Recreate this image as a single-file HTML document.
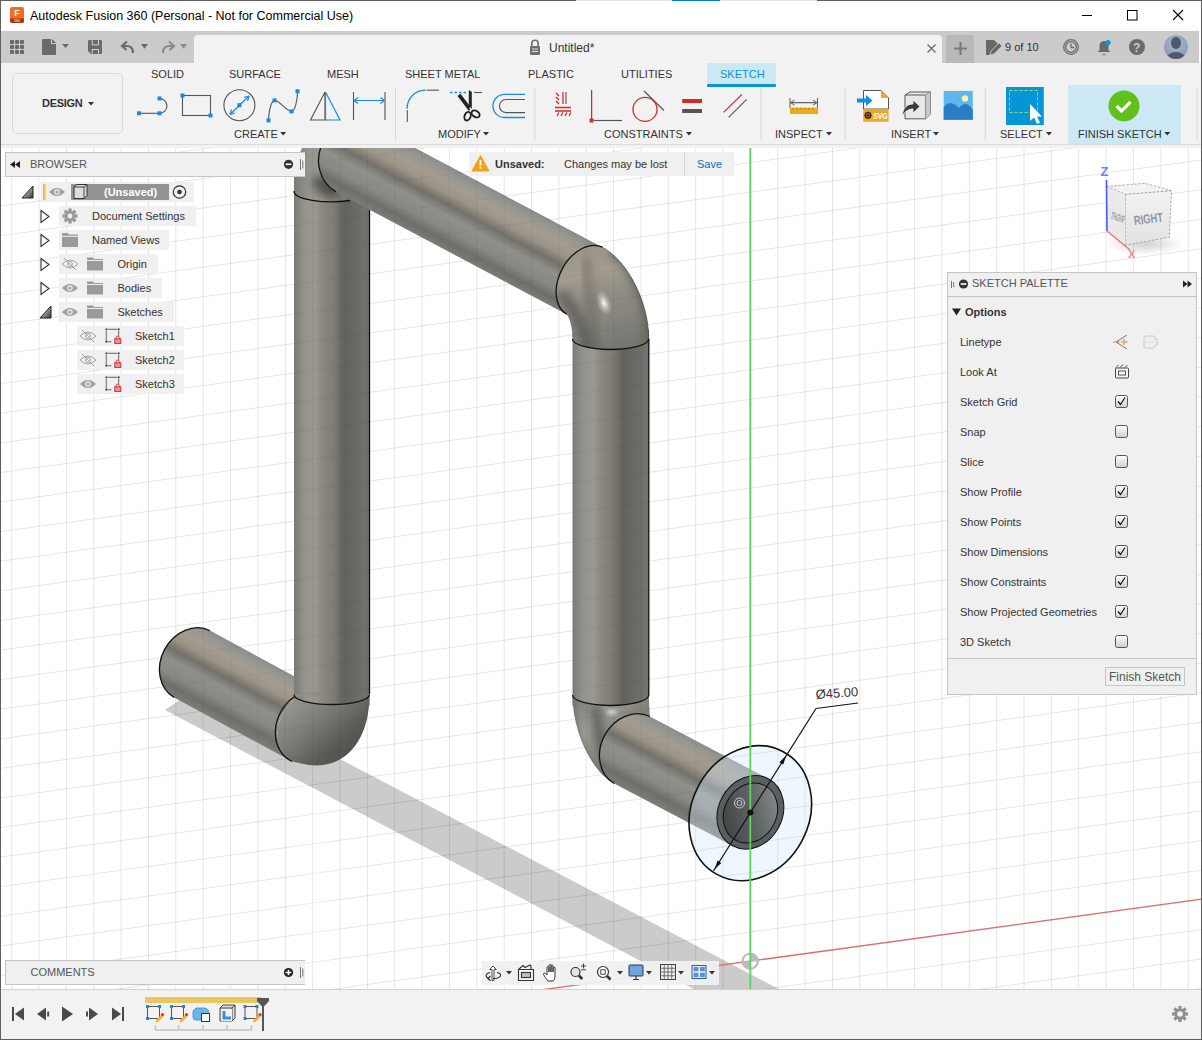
<!DOCTYPE html>
<html><head><meta charset="utf-8">
<style>
*{box-sizing:border-box}
html,body{margin:0;padding:0;width:1202px;height:1040px;overflow:hidden;background:#fff;font-family:"Liberation Sans",sans-serif;color:#333}
.a{position:absolute}
.t{position:absolute;white-space:nowrap;line-height:1}
svg{position:absolute;overflow:visible}
.tb{font-size:11px;color:#333}
</style></head><body>
<svg id="vp" style="left:0;top:0;overflow:hidden" width="1202" height="1040" viewBox="0 0 1202 1040">
<clipPath id="vpc"><rect x="1" y="148" width="1200" height="841"/></clipPath>
<g clip-path="url(#vpc)">
<defs>
<linearGradient id="gv" x1="0" y1="0" x2="1" y2="0">
<stop offset="0" stop-color="#7b7b76"/><stop offset="0.15" stop-color="#959590"/><stop offset="0.28" stop-color="#9a978f"/><stop offset="0.38" stop-color="#8b877e"/><stop offset="0.52" stop-color="#7d7c75"/><stop offset="0.67" stop-color="#62625d"/><stop offset="0.88" stop-color="#6d6d69"/><stop offset="1" stop-color="#74746f"/>
</linearGradient>
<linearGradient id="gs" gradientUnits="userSpaceOnUse" x1="607.9" y1="251.5" x2="572.1" y2="318.5">
<stop offset="0" stop-color="#8c8d88"/><stop offset="0.08" stop-color="#979791"/><stop offset="0.2" stop-color="#a49c8f"/><stop offset="0.32" stop-color="#9b9488"/><stop offset="0.45" stop-color="#73716a"/><stop offset="0.58" stop-color="#8f908b"/><stop offset="0.75" stop-color="#888984"/><stop offset="0.88" stop-color="#6e6f6a"/><stop offset="1" stop-color="#7c7d78"/>
</linearGradient>
<linearGradient id="gsb" href="#gs" x1="209.9" y1="630.5" x2="174.1" y2="697.5"/>
<linearGradient id="gsbr" href="#gs" x1="768.3" y1="778.8" x2="732.5" y2="845.8"/>
<linearGradient id="ge2" gradientUnits="userSpaceOnUse" x1="585" y1="248" x2="612" y2="350">
<stop offset="0" stop-color="#9b968b"/><stop offset="0.25" stop-color="#a39c8f"/><stop offset="0.5" stop-color="#8e8b83"/><stop offset="0.75" stop-color="#83837d"/><stop offset="1" stop-color="#767671"/>
</linearGradient>
<filter id="bl4" x="-50%" y="-50%" width="200%" height="200%"><feGaussianBlur stdDeviation="4"/></filter>
<filter id="bl2" x="-50%" y="-50%" width="200%" height="200%"><feGaussianBlur stdDeviation="2"/></filter>
<clipPath id="e2c"><path d="M566.6,314.2 A38 26 -61.85 0 1 602.4,247.2 C627.9,261 648.8,302.2 648.8,339 A38.15 10.5 0 0 1 572.5,339 C572.5,328 570,318 566.6,314.2 Z"/></clipPath>
<linearGradient id="ge3" gradientUnits="userSpaceOnUse" x1="298" y1="702" x2="352" y2="762">
<stop offset="0" stop-color="#92928d"/><stop offset="0.35" stop-color="#7a7973"/><stop offset="0.7" stop-color="#5b5a55"/><stop offset="1" stop-color="#4f4e4a"/>
</linearGradient>
<linearGradient id="ge4" gradientUnits="userSpaceOnUse" x1="572" y1="700" x2="650" y2="760">
<stop offset="0" stop-color="#7c7c77"/><stop offset="0.3" stop-color="#9a9a95"/><stop offset="0.6" stop-color="#85847c"/><stop offset="1" stop-color="#6c6c67"/>
</linearGradient>
<linearGradient id="gin" gradientUnits="userSpaceOnUse" x1="730" y1="790" x2="775" y2="840">
<stop offset="0" stop-color="#3f4444"/><stop offset="0.5" stop-color="#5e6464"/><stop offset="1" stop-color="#8d9290"/>
</linearGradient>
<radialGradient id="hl" cx="0.5" cy="0.5" r="0.5">
<stop offset="0" stop-color="#fff" stop-opacity="0.95"/><stop offset="0.5" stop-color="#fff" stop-opacity="0.35"/><stop offset="1" stop-color="#fff" stop-opacity="0"/>
</radialGradient>
</defs>
<g stroke="rgba(0,0,0,0.058)" stroke-width="1">
<line x1="11.7" y1="148" x2="11.7" y2="989"/>
<line x1="39.0" y1="148" x2="39.0" y2="989"/>
<line x1="66.4" y1="148" x2="66.4" y2="989"/>
<line x1="93.8" y1="148" x2="93.8" y2="989"/>
<line x1="121.1" y1="148" x2="121.1" y2="989"/>
<line x1="148.5" y1="148" x2="148.5" y2="989"/>
<line x1="175.8" y1="148" x2="175.8" y2="989"/>
<line x1="203.2" y1="148" x2="203.2" y2="989"/>
<line x1="230.6" y1="148" x2="230.6" y2="989"/>
<line x1="257.9" y1="148" x2="257.9" y2="989"/>
<line x1="285.3" y1="148" x2="285.3" y2="989"/>
<line x1="312.6" y1="148" x2="312.6" y2="989"/>
<line x1="340.0" y1="148" x2="340.0" y2="989"/>
<line x1="367.4" y1="148" x2="367.4" y2="989"/>
<line x1="394.7" y1="148" x2="394.7" y2="989"/>
<line x1="422.1" y1="148" x2="422.1" y2="989"/>
<line x1="449.4" y1="148" x2="449.4" y2="989"/>
<line x1="476.8" y1="148" x2="476.8" y2="989"/>
<line x1="504.2" y1="148" x2="504.2" y2="989"/>
<line x1="531.5" y1="148" x2="531.5" y2="989"/>
<line x1="558.9" y1="148" x2="558.9" y2="989"/>
<line x1="586.2" y1="148" x2="586.2" y2="989"/>
<line x1="613.6" y1="148" x2="613.6" y2="989"/>
<line x1="641.0" y1="148" x2="641.0" y2="989"/>
<line x1="668.3" y1="148" x2="668.3" y2="989"/>
<line x1="695.7" y1="148" x2="695.7" y2="989"/>
<line x1="723.0" y1="148" x2="723.0" y2="989"/>
<line x1="750.4" y1="148" x2="750.4" y2="989"/>
<line x1="777.8" y1="148" x2="777.8" y2="989"/>
<line x1="805.1" y1="148" x2="805.1" y2="989"/>
<line x1="832.5" y1="148" x2="832.5" y2="989"/>
<line x1="859.8" y1="148" x2="859.8" y2="989"/>
<line x1="887.2" y1="148" x2="887.2" y2="989"/>
<line x1="914.6" y1="148" x2="914.6" y2="989"/>
<line x1="941.9" y1="148" x2="941.9" y2="989"/>
<line x1="969.3" y1="148" x2="969.3" y2="989"/>
<line x1="996.6" y1="148" x2="996.6" y2="989"/>
<line x1="1024.0" y1="148" x2="1024.0" y2="989"/>
<line x1="1051.4" y1="148" x2="1051.4" y2="989"/>
<line x1="1078.7" y1="148" x2="1078.7" y2="989"/>
<line x1="1106.1" y1="148" x2="1106.1" y2="989"/>
<line x1="1133.4" y1="148" x2="1133.4" y2="989"/>
<line x1="1160.8" y1="148" x2="1160.8" y2="989"/>
<line x1="1188.2" y1="148" x2="1188.2" y2="989"/>
<line x1="0" y1="147.1" x2="1202" y2="-17.6"/>
<line x1="0" y1="176.7" x2="1202" y2="12.0"/>
<line x1="0" y1="206.2" x2="1202" y2="41.6"/>
<line x1="0" y1="235.8" x2="1202" y2="71.2"/>
<line x1="0" y1="265.4" x2="1202" y2="100.7"/>
<line x1="0" y1="295.0" x2="1202" y2="130.3"/>
<line x1="0" y1="324.6" x2="1202" y2="159.9"/>
<line x1="0" y1="354.2" x2="1202" y2="189.5"/>
<line x1="0" y1="383.8" x2="1202" y2="219.1"/>
<line x1="0" y1="413.4" x2="1202" y2="248.7"/>
<line x1="0" y1="443.0" x2="1202" y2="278.3"/>
<line x1="0" y1="472.6" x2="1202" y2="307.9"/>
<line x1="0" y1="502.1" x2="1202" y2="337.5"/>
<line x1="0" y1="531.7" x2="1202" y2="367.1"/>
<line x1="0" y1="561.3" x2="1202" y2="396.6"/>
<line x1="0" y1="590.9" x2="1202" y2="426.2"/>
<line x1="0" y1="620.5" x2="1202" y2="455.8"/>
<line x1="0" y1="650.1" x2="1202" y2="485.4"/>
<line x1="0" y1="679.7" x2="1202" y2="515.0"/>
<line x1="0" y1="709.3" x2="1202" y2="544.6"/>
<line x1="0" y1="738.9" x2="1202" y2="574.2"/>
<line x1="0" y1="768.5" x2="1202" y2="603.8"/>
<line x1="0" y1="798.0" x2="1202" y2="633.4"/>
<line x1="0" y1="827.6" x2="1202" y2="663.0"/>
<line x1="0" y1="857.2" x2="1202" y2="692.5"/>
<line x1="0" y1="886.8" x2="1202" y2="722.1"/>
<line x1="0" y1="916.4" x2="1202" y2="751.7"/>
<line x1="0" y1="946.0" x2="1202" y2="781.3"/>
<line x1="0" y1="975.6" x2="1202" y2="810.9"/>
<line x1="0" y1="1005.2" x2="1202" y2="840.5"/>
<line x1="0" y1="1034.8" x2="1202" y2="870.1"/>
<line x1="0" y1="1064.4" x2="1202" y2="899.7"/>
<line x1="0" y1="1093.9" x2="1202" y2="929.3"/>
<line x1="0" y1="1123.5" x2="1202" y2="958.9"/>
<line x1="0" y1="1153.1" x2="1202" y2="988.4"/>
</g>
<filter id="bl8" x="-50%" y="-50%" width="200%" height="200%"><feGaussianBlur stdDeviation="7"/></filter>
<path d="M165,722 L300,792 L300,975 L330,975 L330,770 L180,700 Z" fill="#fff" opacity="0.5" filter="url(#bl8)"/>
<!-- shadow band -->
<clipPath id="shc"><polygon points="165,709.9 200,685.7 1000,1104.9 1000,1150.8"/></clipPath>
<polygon points="165,709.9 200,685.7 1000,1104.9 1000,1150.8" fill="#cbcbcb"/>
<g stroke="rgba(0,0,0,0.058)" stroke-width="1" clip-path="url(#shc)">
<line x1="11.7" y1="148" x2="11.7" y2="989"/>
<line x1="39.0" y1="148" x2="39.0" y2="989"/>
<line x1="66.4" y1="148" x2="66.4" y2="989"/>
<line x1="93.8" y1="148" x2="93.8" y2="989"/>
<line x1="121.1" y1="148" x2="121.1" y2="989"/>
<line x1="148.5" y1="148" x2="148.5" y2="989"/>
<line x1="175.8" y1="148" x2="175.8" y2="989"/>
<line x1="203.2" y1="148" x2="203.2" y2="989"/>
<line x1="230.6" y1="148" x2="230.6" y2="989"/>
<line x1="257.9" y1="148" x2="257.9" y2="989"/>
<line x1="285.3" y1="148" x2="285.3" y2="989"/>
<line x1="312.6" y1="148" x2="312.6" y2="989"/>
<line x1="340.0" y1="148" x2="340.0" y2="989"/>
<line x1="367.4" y1="148" x2="367.4" y2="989"/>
<line x1="394.7" y1="148" x2="394.7" y2="989"/>
<line x1="422.1" y1="148" x2="422.1" y2="989"/>
<line x1="449.4" y1="148" x2="449.4" y2="989"/>
<line x1="476.8" y1="148" x2="476.8" y2="989"/>
<line x1="504.2" y1="148" x2="504.2" y2="989"/>
<line x1="531.5" y1="148" x2="531.5" y2="989"/>
<line x1="558.9" y1="148" x2="558.9" y2="989"/>
<line x1="586.2" y1="148" x2="586.2" y2="989"/>
<line x1="613.6" y1="148" x2="613.6" y2="989"/>
<line x1="641.0" y1="148" x2="641.0" y2="989"/>
<line x1="668.3" y1="148" x2="668.3" y2="989"/>
<line x1="695.7" y1="148" x2="695.7" y2="989"/>
<line x1="723.0" y1="148" x2="723.0" y2="989"/>
<line x1="750.4" y1="148" x2="750.4" y2="989"/>
<line x1="777.8" y1="148" x2="777.8" y2="989"/>
<line x1="805.1" y1="148" x2="805.1" y2="989"/>
<line x1="832.5" y1="148" x2="832.5" y2="989"/>
<line x1="859.8" y1="148" x2="859.8" y2="989"/>
<line x1="887.2" y1="148" x2="887.2" y2="989"/>
<line x1="914.6" y1="148" x2="914.6" y2="989"/>
<line x1="941.9" y1="148" x2="941.9" y2="989"/>
<line x1="969.3" y1="148" x2="969.3" y2="989"/>
<line x1="996.6" y1="148" x2="996.6" y2="989"/>
<line x1="1024.0" y1="148" x2="1024.0" y2="989"/>
<line x1="1051.4" y1="148" x2="1051.4" y2="989"/>
<line x1="1078.7" y1="148" x2="1078.7" y2="989"/>
<line x1="1106.1" y1="148" x2="1106.1" y2="989"/>
<line x1="1133.4" y1="148" x2="1133.4" y2="989"/>
<line x1="1160.8" y1="148" x2="1160.8" y2="989"/>
<line x1="1188.2" y1="148" x2="1188.2" y2="989"/>
<line x1="0" y1="147.1" x2="1202" y2="-17.6"/>
<line x1="0" y1="176.7" x2="1202" y2="12.0"/>
<line x1="0" y1="206.2" x2="1202" y2="41.6"/>
<line x1="0" y1="235.8" x2="1202" y2="71.2"/>
<line x1="0" y1="265.4" x2="1202" y2="100.7"/>
<line x1="0" y1="295.0" x2="1202" y2="130.3"/>
<line x1="0" y1="324.6" x2="1202" y2="159.9"/>
<line x1="0" y1="354.2" x2="1202" y2="189.5"/>
<line x1="0" y1="383.8" x2="1202" y2="219.1"/>
<line x1="0" y1="413.4" x2="1202" y2="248.7"/>
<line x1="0" y1="443.0" x2="1202" y2="278.3"/>
<line x1="0" y1="472.6" x2="1202" y2="307.9"/>
<line x1="0" y1="502.1" x2="1202" y2="337.5"/>
<line x1="0" y1="531.7" x2="1202" y2="367.1"/>
<line x1="0" y1="561.3" x2="1202" y2="396.6"/>
<line x1="0" y1="590.9" x2="1202" y2="426.2"/>
<line x1="0" y1="620.5" x2="1202" y2="455.8"/>
<line x1="0" y1="650.1" x2="1202" y2="485.4"/>
<line x1="0" y1="679.7" x2="1202" y2="515.0"/>
<line x1="0" y1="709.3" x2="1202" y2="544.6"/>
<line x1="0" y1="738.9" x2="1202" y2="574.2"/>
<line x1="0" y1="768.5" x2="1202" y2="603.8"/>
<line x1="0" y1="798.0" x2="1202" y2="633.4"/>
<line x1="0" y1="827.6" x2="1202" y2="663.0"/>
<line x1="0" y1="857.2" x2="1202" y2="692.5"/>
<line x1="0" y1="886.8" x2="1202" y2="722.1"/>
<line x1="0" y1="916.4" x2="1202" y2="751.7"/>
<line x1="0" y1="946.0" x2="1202" y2="781.3"/>
<line x1="0" y1="975.6" x2="1202" y2="810.9"/>
<line x1="0" y1="1005.2" x2="1202" y2="840.5"/>
<line x1="0" y1="1034.8" x2="1202" y2="870.1"/>
<line x1="0" y1="1064.4" x2="1202" y2="899.7"/>
<line x1="0" y1="1093.9" x2="1202" y2="929.3"/>
<line x1="0" y1="1123.5" x2="1202" y2="958.9"/>
<line x1="0" y1="1153.1" x2="1202" y2="988.4"/>
</g>
<!-- red axis -->
<line x1="540" y1="990" x2="1202" y2="899" stroke="#e07070" stroke-width="1.3"/>
<!-- BL pipe -->
<path d="M209.9,630.5 L327.9,694.5 A38 32 -61.85 0 0 292.1,761.5 L174.1,697.5 A38 32 -61.85 0 1 209.9,630.5 Z" fill="url(#gsb)"/>
<!-- VP1 -->
<rect x="294" y="185" width="75.5" height="521" fill="url(#gv)"/>
<!-- E3 -->
<path d="M294,694.5 A37.75 10 0 0 0 369.5,694.5 C369.5,748 338,773 301,763.5 L292.1,761.5 A38 32 -61.85 0 1 327.9,694.5 Z" fill="url(#ge3)"/>
<!-- E1 -->
<path d="M294,191 L294,178 Q296,160 302,148 L390,148 L372.9,210 L369.5,191 A37.75 10.5 0 0 1 294,191 Z" fill="url(#gv)"/>
<!-- TP -->
<clipPath id="e1c"><path d="M294,191 L294,178 Q296,160 302,148 L390,148 L372.9,210 L369.5,191 A37.75 10.5 0 0 1 294,191 Z"/></clipPath>
<g clip-path="url(#e1c)"><ellipse cx="326" cy="187" rx="15" ry="9" transform="rotate(35 326 187)" fill="#4a4a45" opacity="0.85" filter="url(#bl4)"/></g>
<path d="M371.9,125 L602.4,247.2 A38 26 -61.85 0 0 566.6,314.2 L336.1,192 A38 36 -61.85 0 1 371.9,125 Z" fill="url(#gs)"/>
<!-- VP2 -->
<rect x="572.5" y="330" width="76.3" height="376" fill="url(#gv)"/>
<!-- E2 -->
<path d="M566.6,314.2 A38 26 -61.85 0 1 602.4,247.2 C627.9,261 648.8,302.2 648.8,339 A38.15 10.5 0 0 1 572.5,339 C572.5,328 570,318 566.6,314.2 Z" fill="url(#ge2)"/>
<g clip-path="url(#e2c)">
<path d="M560,292 Q580,315 590,352" fill="none" stroke="#5a5a54" stroke-width="12" opacity="0.75" filter="url(#bl4)"/>
<path d="M586,258 Q590,300 596,348" fill="none" stroke="#66645c" stroke-width="8" opacity="0.55" filter="url(#bl4)"/>
<path d="M612,250 C634,263 652,302 652,345" fill="none" stroke="#555550" stroke-width="12" opacity="0.7" filter="url(#bl4)"/>
</g>
<ellipse cx="604" cy="303" rx="7" ry="13" transform="rotate(-20 604 303)" fill="url(#hl)"/>
<!-- E4 -->
<path d="M572.5,695 A38.15 10.5 0 0 0 648.8,695 Q649.5,712 649.9,716.5 A38 32 -61.85 0 0 614.1,783.5 C591.2,771.2 572.5,731.4 572.5,695 Z" fill="url(#ge4)"/>
<clipPath id="e4c"><path d="M572.5,695 A38.15 10.5 0 0 0 648.8,695 Q649.5,712 649.9,716.5 A38 32 -61.85 0 0 614.1,783.5 C591.2,771.2 572.5,731.4 572.5,695 Z"/></clipPath>
<g clip-path="url(#e4c)">
<path d="M596,706 Q598,745 618,790" fill="none" stroke="#50504b" stroke-width="9" opacity="0.8" filter="url(#bl4)"/>
<path d="M572,700 C572,735 590,772 614,786" fill="none" stroke="#5c5c57" stroke-width="6" opacity="0.4" filter="url(#bl2)"/>
</g>
<ellipse cx="612" cy="712.3" rx="5" ry="2" fill="#fff" opacity="0.85" filter="url(#bl2)"/>
<!-- BR pipe -->
<path d="M649.9,716.5 L768.3,778.8 A38 32 -61.85 0 1 732.5,845.8 L614.1,783.5 A38 32 -61.85 0 1 649.9,716.5 Z" fill="url(#gsbr)"/>
<!-- seams / edges -->
<g fill="none" stroke="#111" stroke-width="1.3">
<path d="M602.4,247.2 A38 26 -61.85 0 0 566.6,314.2"/>

<path d="M572.5,339 A38.15 10.5 0 0 0 648.8,339"/>
<path d="M371.9,125 A38 36 -61.85 0 0 336.1,192"/>
<path d="M294,191 A37.75 10.5 0 0 0 350,200.5"/>
<path d="M294,694.5 A37.75 10 0 0 0 369.5,694.5"/>
<path d="M292.1,761.5 A38 32 -61.85 0 1 294,697"/>
<path d="M572.5,695 A38.15 10.5 0 0 0 648.8,695"/>
<path d="M649.9,716.5 A38 32 -61.85 0 0 614.1,783.5"/>
<path d="M209.9,630.5 A38 32 -61.85 0 0 174.1,697.5"/>
<line x1="369.5" y1="210" x2="369.5" y2="694"/>
<line x1="648.8" y1="339" x2="648.8" y2="695"/>
<path d="M602.4,247.2 C627.9,261 648.8,302.2 648.8,339" stroke-width="1" opacity="0.45"/>
</g>
<!-- sketch circle -->
<ellipse cx="750.3" cy="813.2" rx="69.7" ry="58.6" transform="rotate(-61.85 750.3 813.2)" fill="rgba(212,232,250,0.38)" stroke="#111" stroke-width="1.6"/>
<!-- end face -->
<ellipse cx="750.4" cy="812.3" rx="38" ry="32" transform="rotate(-61.85 750.4 812.3)" fill="#596060" stroke="#111" stroke-width="1"/>
<ellipse cx="750.4" cy="813" rx="31" ry="26" transform="rotate(-61.85 750.4 813)" fill="url(#gin)" stroke="#111" stroke-width="1"/>
<!-- small concentric icon -->
<circle cx="739.5" cy="803" r="5" fill="none" stroke="#ccc" stroke-width="1"/>
<circle cx="739.5" cy="803" r="2.5" fill="none" stroke="#ccc" stroke-width="1"/>
<!-- green axis -->

<!-- grid -->
<g stroke="rgba(0,0,0,0.045)" stroke-width="1">
<line x1="11.7" y1="148" x2="11.7" y2="989"/>
<line x1="39.0" y1="148" x2="39.0" y2="989"/>
<line x1="66.4" y1="148" x2="66.4" y2="989"/>
<line x1="93.8" y1="148" x2="93.8" y2="989"/>
<line x1="121.1" y1="148" x2="121.1" y2="989"/>
<line x1="148.5" y1="148" x2="148.5" y2="989"/>
<line x1="175.8" y1="148" x2="175.8" y2="989"/>
<line x1="203.2" y1="148" x2="203.2" y2="989"/>
<line x1="230.6" y1="148" x2="230.6" y2="989"/>
<line x1="257.9" y1="148" x2="257.9" y2="989"/>
<line x1="285.3" y1="148" x2="285.3" y2="989"/>
<line x1="312.6" y1="148" x2="312.6" y2="989"/>
<line x1="340.0" y1="148" x2="340.0" y2="989"/>
<line x1="367.4" y1="148" x2="367.4" y2="989"/>
<line x1="394.7" y1="148" x2="394.7" y2="989"/>
<line x1="422.1" y1="148" x2="422.1" y2="989"/>
<line x1="449.4" y1="148" x2="449.4" y2="989"/>
<line x1="476.8" y1="148" x2="476.8" y2="989"/>
<line x1="504.2" y1="148" x2="504.2" y2="989"/>
<line x1="531.5" y1="148" x2="531.5" y2="989"/>
<line x1="558.9" y1="148" x2="558.9" y2="989"/>
<line x1="586.2" y1="148" x2="586.2" y2="989"/>
<line x1="613.6" y1="148" x2="613.6" y2="989"/>
<line x1="641.0" y1="148" x2="641.0" y2="989"/>
<line x1="668.3" y1="148" x2="668.3" y2="989"/>
<line x1="695.7" y1="148" x2="695.7" y2="989"/>
<line x1="723.0" y1="148" x2="723.0" y2="989"/>
<line x1="750.4" y1="148" x2="750.4" y2="989"/>
<line x1="777.8" y1="148" x2="777.8" y2="989"/>
<line x1="805.1" y1="148" x2="805.1" y2="989"/>
<line x1="832.5" y1="148" x2="832.5" y2="989"/>
<line x1="859.8" y1="148" x2="859.8" y2="989"/>
<line x1="887.2" y1="148" x2="887.2" y2="989"/>
<line x1="914.6" y1="148" x2="914.6" y2="989"/>
<line x1="941.9" y1="148" x2="941.9" y2="989"/>
<line x1="969.3" y1="148" x2="969.3" y2="989"/>
<line x1="996.6" y1="148" x2="996.6" y2="989"/>
<line x1="1024.0" y1="148" x2="1024.0" y2="989"/>
<line x1="1051.4" y1="148" x2="1051.4" y2="989"/>
<line x1="1078.7" y1="148" x2="1078.7" y2="989"/>
<line x1="1106.1" y1="148" x2="1106.1" y2="989"/>
<line x1="1133.4" y1="148" x2="1133.4" y2="989"/>
<line x1="1160.8" y1="148" x2="1160.8" y2="989"/>
<line x1="1188.2" y1="148" x2="1188.2" y2="989"/>
<line x1="0" y1="147.1" x2="1202" y2="-17.6"/>
<line x1="0" y1="176.7" x2="1202" y2="12.0"/>
<line x1="0" y1="206.2" x2="1202" y2="41.6"/>
<line x1="0" y1="235.8" x2="1202" y2="71.2"/>
<line x1="0" y1="265.4" x2="1202" y2="100.7"/>
<line x1="0" y1="295.0" x2="1202" y2="130.3"/>
<line x1="0" y1="324.6" x2="1202" y2="159.9"/>
<line x1="0" y1="354.2" x2="1202" y2="189.5"/>
<line x1="0" y1="383.8" x2="1202" y2="219.1"/>
<line x1="0" y1="413.4" x2="1202" y2="248.7"/>
<line x1="0" y1="443.0" x2="1202" y2="278.3"/>
<line x1="0" y1="472.6" x2="1202" y2="307.9"/>
<line x1="0" y1="502.1" x2="1202" y2="337.5"/>
<line x1="0" y1="531.7" x2="1202" y2="367.1"/>
<line x1="0" y1="561.3" x2="1202" y2="396.6"/>
<line x1="0" y1="590.9" x2="1202" y2="426.2"/>
<line x1="0" y1="620.5" x2="1202" y2="455.8"/>
<line x1="0" y1="650.1" x2="1202" y2="485.4"/>
<line x1="0" y1="679.7" x2="1202" y2="515.0"/>
<line x1="0" y1="709.3" x2="1202" y2="544.6"/>
<line x1="0" y1="738.9" x2="1202" y2="574.2"/>
<line x1="0" y1="768.5" x2="1202" y2="603.8"/>
<line x1="0" y1="798.0" x2="1202" y2="633.4"/>
<line x1="0" y1="827.6" x2="1202" y2="663.0"/>
<line x1="0" y1="857.2" x2="1202" y2="692.5"/>
<line x1="0" y1="886.8" x2="1202" y2="722.1"/>
<line x1="0" y1="916.4" x2="1202" y2="751.7"/>
<line x1="0" y1="946.0" x2="1202" y2="781.3"/>
<line x1="0" y1="975.6" x2="1202" y2="810.9"/>
<line x1="0" y1="1005.2" x2="1202" y2="840.5"/>
<line x1="0" y1="1034.8" x2="1202" y2="870.1"/>
<line x1="0" y1="1064.4" x2="1202" y2="899.7"/>
<line x1="0" y1="1093.9" x2="1202" y2="929.3"/>
<line x1="0" y1="1123.5" x2="1202" y2="958.9"/>
<line x1="0" y1="1153.1" x2="1202" y2="988.4"/>
</g>
<!-- origin -->
<circle cx="750.2" cy="961.2" r="7.6" fill="none" stroke="#bcbcbc" stroke-width="2.2"/><path d="M750.2,961.2 v-7.6 a7.6,7.6 0 0 1 7.6,7.6z M750.2,961.2 v7.6 a7.6,7.6 0 0 1 -7.6,-7.6z" fill="#bcbcbc"/>
<line x1="750.3" y1="148" x2="750.3" y2="989" stroke="#5ad55a" stroke-width="1.8"/>
<!-- dimension -->
<g stroke="#111" stroke-width="1.2" fill="none">
<line x1="713.5" y1="871" x2="816" y2="708.5"/>
<line x1="816" y1="708.5" x2="858" y2="703"/>
</g>
<polygon points="714.6,869.3 721.3,862.9 717.5,860.5" fill="#111"/>
<polygon points="786.1,755.8 783.2,764.6 779.4,762.2" fill="#111"/>
<circle cx="750.4" cy="812.5" r="3" fill="#111"/>
<text x="816" y="699" font-size="13" fill="#333" transform="rotate(-4 816 699)" font-family="Liberation Sans">Ø45.00</text>

</g>
</svg>
<!-- BROWSER -->
<div class="a" style="left:5px;top:152px;width:300px;height:25px;background:#f0f0f0;border:1px solid #c6c6c6;border-right:none"></div>
<div class="t" style="left:30px;top:158.9px;font-size:11px;color:#555">BROWSER</div>
<div class="a" style="left:41px;top:182px;width:153px;height:20px;background:#f0f0f0"></div>
<div class="a" style="left:59px;top:206px;width:137px;height:20px;background:#f0f0f0"></div>
<div class="a" style="left:59px;top:230px;width:110px;height:20px;background:#f0f0f0"></div>
<div class="a" style="left:59px;top:254px;width:99px;height:20px;background:#f0f0f0"></div>
<div class="a" style="left:59px;top:278px;width:103px;height:20px;background:#f0f0f0"></div>
<div class="a" style="left:59px;top:302px;width:115px;height:20px;background:#f0f0f0"></div>
<div class="a" style="left:77px;top:326px;width:107px;height:20px;background:#f0f0f0"></div>
<div class="a" style="left:77px;top:350px;width:107px;height:20px;background:#f0f0f0"></div>
<div class="a" style="left:77px;top:374px;width:107px;height:20px;background:#f0f0f0"></div>
<div class="a" style="left:71px;top:184px;width:98px;height:16px;background:#939393"></div>
<div class="t" style="left:104px;top:186.5px;font-size:11px;font-weight:bold;color:#fff">(Unsaved)</div>
<div class="t" style="left:92px;top:210.5px;font-size:11px;color:#333">Document Settings</div>
<div class="t" style="left:92px;top:234.5px;font-size:11px;color:#333">Named Views</div>
<div class="t" style="left:117.5px;top:258.7px;font-size:11px;color:#333">Origin</div>
<div class="t" style="left:117.5px;top:282.7px;font-size:11px;color:#333">Bodies</div>
<div class="t" style="left:117.5px;top:306.7px;font-size:11px;color:#333">Sketches</div>
<div class="t" style="left:135px;top:330.7px;font-size:11px;color:#333">Sketch1</div>
<div class="t" style="left:135px;top:354.7px;font-size:11px;color:#333">Sketch2</div>
<div class="t" style="left:135px;top:378.7px;font-size:11px;color:#333">Sketch3</div>
<svg style="left:0;top:0" width="310" height="400">
<defs>
<linearGradient id="tri" x1="0" y1="0" x2="1" y2="1"><stop offset="0" stop-color="#fff"/><stop offset="1" stop-color="#333"/></linearGradient>
</defs>
<path d="M15,164.5 l5,-3.5 v7z M10,164.5 l5,-3.5 v7z" fill="#222"/>
<circle cx="288.5" cy="164.3" r="4.6" fill="#333"/><rect x="285.7" y="163.5" width="5.6" height="1.6" fill="#fff"/>
<path d="M300.5,159 v11 M302.8,160.5 v8" stroke="#555" stroke-width="0.8"/>
<!-- row1 -->
<path d="M33,186 v12 h-11z" fill="url(#tri)" stroke="#222" stroke-width="1"/>
<rect x="43" y="184" width="2.5" height="16" fill="#e6c350"/>
<g>
<path d="M49,192 q8,-8 16,0 q-8,8 -16,0z" fill="#a0a0a0"/><circle cx="57" cy="192" r="2.8" fill="#f0f0f0"/><circle cx="57" cy="192" r="1.6" fill="#a0a0a0"/>
</g>
<path d="M74,187 l3,-2.5 h10 v11 l-3,3 h-10z" fill="#dcdde2" stroke="#333" stroke-width="1"/>
<path d="M74,187 h10 v12 M84,187 l3,-2.5" fill="none" stroke="#333" stroke-width="0.9"/>
<circle cx="179.5" cy="192" r="6.2" fill="none" stroke="#333" stroke-width="1.2"/><circle cx="179.5" cy="192" r="2.3" fill="#333"/>
<!-- expand arrows -->
<g fill="#fafafa" stroke="#333" stroke-width="1.1">
<path d="M41,210.5 l8,6 l-8,6z"/><path d="M41,234.5 l8,6 l-8,6z"/><path d="M41,258.5 l8,6 l-8,6z"/><path d="M41,282.5 l8,6 l-8,6z"/>
</g>
<path d="M51,306 v12 h-11z" fill="url(#tri)" stroke="#222" stroke-width="1"/>
<!-- gear -->
<g transform="translate(70,216)" fill="#9a9a9a">
<circle r="5.2"/>
<g><rect x="-1.7" y="-7.5" width="3.4" height="15"/><rect x="-1.7" y="-7.5" width="3.4" height="15" transform="rotate(45)"/><rect x="-1.7" y="-7.5" width="3.4" height="15" transform="rotate(90)"/><rect x="-1.7" y="-7.5" width="3.4" height="15" transform="rotate(135)"/></g>
<circle r="2.4" fill="#f0f0f0"/>
</g>
<!-- folders -->
<g fill="#9a9a9a">
<path d="M62,233 h6 l1,1.5 h9 v12.5 h-16z"/>
<path d="M87,257.5 h6 l1,1.5 h9 v11.5 h-16z"/>
<path d="M87,281.5 h6 l1,1.5 h9 v11.5 h-16z"/>
<path d="M87,305.5 h6 l1,1.5 h9 v11.5 h-16z"/>
</g>
<g fill="#f0f0f0"><rect x="62" y="235.8" width="16" height="1"/><rect x="87" y="260" width="16" height="1"/><rect x="87" y="284" width="16" height="1"/><rect x="87" y="308" width="16" height="1"/></g>
<!-- eyes -->
<g id="eyeo"><path d="M62,264 q8,-8 16,0 q-8,8 -16,0z" fill="none" stroke="#a0a0a0" stroke-width="1"/><circle cx="70" cy="264" r="2.4" fill="none" stroke="#a0a0a0" stroke-width="1"/><path d="M64,258 l12,12" stroke="#a0a0a0" stroke-width="1"/></g>
<path d="M62,288 q8,-8 16,0 q-8,8 -16,0z" fill="#a0a0a0"/><circle cx="70" cy="288" r="2.8" fill="#f0f0f0"/><circle cx="70" cy="288" r="1.6" fill="#a0a0a0"/>
<path d="M62,312 q8,-8 16,0 q-8,8 -16,0z" fill="#a0a0a0"/><circle cx="70" cy="312" r="2.8" fill="#f0f0f0"/><circle cx="70" cy="312" r="1.6" fill="#a0a0a0"/>
<use href="#eyeo" x="18" y="72"/><use href="#eyeo" x="18" y="96"/>
<path d="M80,384 q8,-8 16,0 q-8,8 -16,0z" fill="#a0a0a0"/><circle cx="88" cy="384" r="2.8" fill="#f0f0f0"/><circle cx="88" cy="384" r="1.6" fill="#a0a0a0"/>
<!-- sketch icons -->
<g id="sk">
<path d="M107.5,329.3 h10 M106.3,330.8 v10 M107.5,341.7 h4 M118.7,330.8 v5" fill="none" stroke="#555" stroke-width="0.9"/>
<g fill="#333"><rect x="105.5" y="328.5" width="1.7" height="1.7"/><rect x="117.9" y="328.5" width="1.7" height="1.7"/><rect x="105.5" y="340.9" width="1.7" height="1.7"/></g>
<rect x="114.8" y="338.8" width="6" height="4.6" fill="#e29999" stroke="#d42f2f" stroke-width="1"/>
<path d="M116.3,338.8 v-1.3 a1.5,1.5 0 0 1 3,0 v1.3" fill="none" stroke="#d42f2f" stroke-width="1"/>
</g>
<use href="#sk" y="24"/><use href="#sk" y="48"/>
</svg>

<!-- NOTIFICATION -->
<div class="a" style="left:469px;top:152px;width:265px;height:24px;background:#f0f0f0"></div>
<div class="a" style="left:684px;top:152px;width:1px;height:24px;background:#d4d4d4"></div>
<svg style="left:0;top:0" width="10" height="10"><path d="M480.5,155.5 l8.5,15.5 h-17z" fill="#f5a01a" stroke="#f5a01a" stroke-width="1" stroke-linejoin="round"/><rect x="479.6" y="160" width="1.8" height="5.5" fill="#fff"/><rect x="479.6" y="166.8" width="1.8" height="1.8" fill="#fff"/></svg>
<div class="t" style="left:495px;top:158.7px;font-size:11px;font-weight:bold;color:#333">Unsaved:</div>
<div class="t" style="left:564px;top:158.7px;font-size:11px;color:#333">Changes may be lost</div>
<div class="t" style="left:697px;top:158.7px;font-size:11px;color:#0f6eb4">Save</div>

<!-- COMMENTS -->
<div class="a" style="left:5px;top:960px;width:300px;height:25px;background:#f0f0f0;border:1px solid #c6c6c6;border-right:none"></div>
<div class="t" style="left:30.5px;top:966.9px;font-size:11px;color:#555">COMMENTS</div>
<svg style="left:0;top:0" width="10" height="10">
<circle cx="288.5" cy="972.5" r="4.6" fill="#222"/><path d="M285.7,972.5 h5.6 M288.5,969.7 v5.6" stroke="#fff" stroke-width="1.5"/>
<path d="M300.5,967 v11 M302.8,968.5 v8" stroke="#555" stroke-width="0.8"/>
</svg>

<!-- NAV BAR -->
<div class="a" style="left:482px;top:961px;width:237px;height:23.5px;background:rgba(240,240,240,0.95)"></div>
<svg style="left:0;top:0" width="10" height="10">
<g fill="none" stroke="#333" stroke-width="1.1">
<path d="M492,980.5 v-11 h-2.3 l3.3,-3.5 l3.3,3.5 h-2.3 v11z" fill="#fff" stroke-width="0.9"/>
<path d="M489,978.5 C485,977 485,973.5 490,972.5 M497,972.5 C502,973.5 502,977 496,978.5 h-3"/>
<path d="M490.5,976 l-2.5,2.6 l2.5,2.2" stroke-width="1.3"/>
<path d="M518.5,969.5 h15 v11 h-15z M518.5,969.5 l4.5,-4 l2,2 l5,-2.5 l1,1 v3.5" fill="#f4f4f4"/>
<rect x="521.5" y="972.5" width="9" height="5" fill="#b9c1cc"/>
<path d="M548,981 C546,979 544.5,976 543.5,974.5 C543,973.5 544.5,972.5 545.5,973.5 L547,975 L547,967.5 A1,1 0 0 1 549,967.5 L549,972 L549,965.5 A1,1 0 0 1 551,965.5 L551,972 L551,966 A1,1 0 0 1 553,966 L553,972 L553,968 A1,1 0 0 1 555,968 L555,976 C555,978.5 554,980 553,981 Z" fill="#fff" stroke-width="1"/>
<circle cx="575.5" cy="972" r="4.5" fill="#dbe8ef" stroke-width="1.2"/><path d="M578.8,975.5 l3.5,3.5" stroke-width="2.6"/><path d="M581,966 h5 M583.5,963.5 v5 M581,969.8 h5" stroke-width="0.9"/>
<circle cx="603" cy="972" r="5.5" fill="#fff" stroke-width="1.2"/><rect x="600.8" y="969.8" width="4.4" height="4.4" stroke-width="0.9"/><path d="M607,976 l3.5,3.5" stroke-width="2.6"/>
</g>
<g fill="#333"><path d="M506,971 h6 l-3,3.5z"/><path d="M617,971 h6 l-3,3.5z"/><path d="M646,971 h6 l-3,3.5z"/><path d="M678,971 h6 l-3,3.5z"/><path d="M709,971 h6 l-3,3.5z"/></g>
<rect x="629" y="965" width="14" height="11" rx="1" fill="#6aa5e6" stroke="#334" stroke-width="1"/><path d="M633,979.5 h6 M636,976 v3" stroke="#334" stroke-width="1.2"/>
<rect x="660.5" y="964.5" width="15" height="15" fill="#eee" stroke="#444" stroke-width="1"/>
<path d="M660.5,968.25 h15 M660.5,972 h15 M660.5,975.75 h15 M664.25,964.5 v15 M668,964.5 v15 M671.75,964.5 v15" stroke="#555" stroke-width="0.8"/>
<rect x="692" y="965.5" width="14" height="13" fill="#e8f0fa" stroke="#2b5aa0" stroke-width="1"/>
<g fill="#5a8fd6"><rect x="693.5" y="967" width="5" height="4.3"/><rect x="700" y="967" width="4.8" height="4.3"/><rect x="693.5" y="972.8" width="5" height="4.3"/><rect x="700" y="972.8" width="4.8" height="4.3"/></g>
</svg>
<!-- VIEW CUBE -->
<svg style="left:0;top:0" width="10" height="10">
<defs>
<linearGradient id="cf" x1="0" y1="0" x2="0" y2="1"><stop offset="0" stop-color="#f4f4f4"/><stop offset="1" stop-color="#e2e2e2"/></linearGradient>
<radialGradient id="csh" cx="0.5" cy="0.5" r="0.5"><stop offset="0" stop-color="#000" stop-opacity="0.18"/><stop offset="1" stop-color="#000" stop-opacity="0"/></radialGradient>
</defs>
<ellipse cx="1145" cy="244" rx="40" ry="11" fill="url(#csh)"/>
<path d="M1106.4,186.5 L1145,183.3 L1171.5,190.7 L1169.4,237.2 L1125.4,245.2 L1106.4,230.4z" fill="url(#cf)" stroke="#9a9a9a" stroke-width="0.8" stroke-dasharray="2.5,1.5"/>
<path d="M1106.4,186.5 L1125.4,194.4 L1171.5,190.7 M1125.4,194.4 L1125.4,245.2" fill="none" stroke="#8a8a8a" stroke-width="0.8" stroke-dasharray="2.5,1.5"/>
<path d="M1106.4,186.5 L1125.4,194.4 L1125.4,245.2 L1106.4,230.4z" fill="#e9e9e9" opacity="0.8"/>
<text x="0" y="0" font-size="10" font-weight="bold" fill="#9a9ea3" font-family="Liberation Sans" transform="translate(1123 223) rotate(20) scale(-0.45 1)">RIGHT</text>
<text x="0" y="0" font-size="12" font-weight="bold" fill="#90959a" font-family="Liberation Sans" transform="translate(1134.5 225) rotate(-7) scale(0.78 1.08)">RIGHT</text>

<line x1="1106.5" y1="180" x2="1107" y2="231" stroke="#4a5ff0" stroke-width="1.6"/>
<line x1="1107" y1="231" x2="1130" y2="250" stroke="#f07a7a" stroke-width="1.6"/>
<text x="1100.5" y="175.5" font-size="13" font-weight="bold" fill="#7083f0" font-family="Liberation Sans">Z</text>
<text x="1128" y="258" font-size="11" font-weight="bold" fill="#f08a8a" font-family="Liberation Sans">X</text>
</svg>

<!-- SKETCH PALETTE -->
<div class="a" style="left:947px;top:272px;width:250px;height:423px;background:#f0f0f0;border:1px solid #c6c6c6"></div>
<div class="a" style="left:948px;top:296px;width:248px;height:1px;background:#c6c6c6"></div>
<div class="a" style="left:948px;top:658px;width:248px;height:1px;background:#c6c6c6"></div>
<div class="t" style="left:972px;top:277.9px;font-size:11px;color:#555">SKETCH PALETTE</div>
<div class="t" style="left:965px;top:306.5px;font-size:11px;font-weight:bold;color:#333">Options</div>
<div class="t" style="left:960px;top:336.7px;font-size:11px;color:#333">Linetype</div>
<div class="t" style="left:960px;top:366.7px;font-size:11px;color:#333">Look At</div>
<div class="t" style="left:960px;top:396.7px;font-size:11px;color:#333">Sketch Grid</div>
<div class="t" style="left:960px;top:426.7px;font-size:11px;color:#333">Snap</div>
<div class="t" style="left:960px;top:456.7px;font-size:11px;color:#333">Slice</div>
<div class="t" style="left:960px;top:486.7px;font-size:11px;color:#333">Show Profile</div>
<div class="t" style="left:960px;top:516.7px;font-size:11px;color:#333">Show Points</div>
<div class="t" style="left:960px;top:546.7px;font-size:11px;color:#333">Show Dimensions</div>
<div class="t" style="left:960px;top:576.7px;font-size:11px;color:#333">Show Constraints</div>
<div class="t" style="left:960px;top:606.7px;font-size:11px;color:#333">Show Projected Geometries</div>
<div class="t" style="left:960px;top:636.7px;font-size:11px;color:#333">3D Sketch</div>
<div class="a" style="left:1105px;top:667px;width:80px;height:19px;background:#f0f0f0;border:1px solid #c6c6c6"></div>
<div class="t" style="left:1109px;top:670.5px;font-size:12px;color:#555">Finish Sketch</div>
<svg style="left:0;top:0" width="10" height="10">
<defs><linearGradient id="cb" x1="0" y1="0" x2="0" y2="1"><stop offset="0" stop-color="#fdfdfd"/><stop offset="1" stop-color="#cfcfcf"/></linearGradient>
<g id="cbx"><rect x="1115.5" y="395.5" width="12" height="12" rx="2" fill="url(#cb)" stroke="#555" stroke-width="1"/></g>
<g id="cbc"><use href="#cbx"/><path d="M1118,401.5 l2.5,3 l4.5,-7" fill="none" stroke="#111" stroke-width="1.2"/></g>
</defs>
<path d="M951.5,281 v7 M953.7,282 v5" stroke="#555" stroke-width="0.8"/>
<circle cx="963.5" cy="284" r="4.6" fill="#333"/><rect x="960.7" y="283.2" width="5.6" height="1.6" fill="#fff"/>
<path d="M1183,280.5 l4.5,3.5 l-4.5,3.5z M1187.5,280.5 l4.5,3.5 l-4.5,3.5z" fill="#222"/>
<path d="M952,308.5 h9 l-4.5,7z" fill="#222"/>
<!-- linetype icons -->
<path d="M1113,342 h16" stroke="#e0782a" stroke-width="1" stroke-dasharray="2.5,1.5"/>
<path d="M1127,335 l-11,7 l11,7" fill="none" stroke="#666" stroke-width="0.9"/>
<path d="M1124,339 v6" stroke="#e0782a" stroke-width="1"/>
<path d="M1146,336 h7 a2,2 0 0 1 2,2 v1 h2 v6 h-2 v1 a2,2 0 0 1 -2,2 h-7 a2,2 0 0 1 -2,-2 v-8 a2,2 0 0 1 2,-2z" fill="none" stroke="#c8c8c8" stroke-width="1"/>
<path d="M1145,342 h12" stroke="#f0c8a8" stroke-width="0.9" stroke-dasharray="2,1.5"/>
<!-- look at -->
<rect x="1115.5" y="368" width="13" height="10" rx="1" fill="#f4f4f4" stroke="#444" stroke-width="1"/>
<rect x="1118.5" y="371" width="7" height="4" fill="none" stroke="#444" stroke-width="0.9"/>
<path d="M1116,367.5 l2.5,-2.5 M1120,367.5 l3,-3 M1125,367.5 l2.5,-2.5" stroke="#444" stroke-width="0.9"/>
<use href="#cbc"/>
<use href="#cbx" y="30"/>
<use href="#cbx" y="60"/>
<use href="#cbc" y="90"/>
<use href="#cbc" y="120"/>
<use href="#cbc" y="150"/>
<use href="#cbc" y="180"/>
<use href="#cbc" y="210"/>
<use href="#cbx" y="240"/>
</svg>


<!-- TITLE BAR -->
<div class="a" style="left:0;top:0;width:1202px;height:31px;background:#fff"></div>
<div class="t" style="left:30px;top:9.7px;font-size:12.5px;color:#000">Autodesk Fusion 360 (Personal - Not for Commercial Use)</div>

<!-- TAB BAR -->
<div class="a" style="left:1px;top:31px;width:1198px;height:32px;background:#cbcbcb"></div>
<div class="a" style="left:194px;top:35px;width:748px;height:28px;background:#f2f2f2;border-radius:4px 4px 0 0"></div>
<div class="a" style="left:946px;top:35px;width:28px;height:28px;background:#b9b9b9;border-radius:3px 3px 0 0"></div>
<div class="t" style="left:549px;top:42px;font-size:12px;color:#333">Untitled*</div>
<div class="t" style="left:1005px;top:42px;font-size:11px;color:#333">9 of 10</div>

<!-- TOOLBAR -->
<div class="a" style="left:1px;top:63px;width:1200px;height:85px;background:#f2f2f2"></div>
<div class="a" style="left:1px;top:144px;width:1200px;height:1px;background:#dcdcdc"></div>
<div class="a" style="left:12px;top:73px;width:111px;height:61px;border:1px solid #dadada;border-radius:5px"></div>
<div class="t" style="left:42px;top:97.6px;font-size:11px;font-weight:bold;letter-spacing:-0.3px;color:#333">DESIGN</div>

<div class="t tb" style="left:151px;top:68.7px">SOLID</div>
<div class="t tb" style="left:229px;top:68.7px">SURFACE</div>
<div class="t tb" style="left:327px;top:68.7px">MESH</div>
<div class="t tb" style="left:405px;top:68.7px">SHEET METAL</div>
<div class="t tb" style="left:528px;top:68.7px">PLASTIC</div>
<div class="t tb" style="left:621px;top:68.7px">UTILITIES</div>
<div class="a" style="left:707px;top:63px;width:69px;height:24px;background:#cde8f5"></div>
<div class="a" style="left:707px;top:84px;width:69px;height:3px;background:#0696d7;border-radius:1px"></div>
<div class="t tb" style="left:720px;top:68.7px;color:#0696d7">SKETCH</div>

<div class="a" style="left:1068px;top:85px;width:113px;height:59px;background:#cde8f5"></div>
<div class="t tb" style="left:234px;top:128.6px">CREATE</div>
<div class="t tb" style="left:438px;top:128.6px">MODIFY</div>
<div class="t tb" style="left:604px;top:128.6px">CONSTRAINTS</div>
<div class="t tb" style="left:775px;top:128.6px">INSPECT</div>
<div class="t tb" style="left:891px;top:128.6px">INSERT</div>
<div class="t tb" style="left:1000px;top:128.6px">SELECT</div>
<div class="t tb" style="left:1078px;top:128.6px">FINISH SKETCH</div>
<svg style="left:0;top:0" width="1202" height="148" viewBox="0 0 1202 148">
<!-- app icon -->
<rect x="10" y="7" width="14" height="16" rx="2" fill="#f36d21"/>
<path d="M10,18.5 h14 v2.5 a2,2 0 0 1 -2,2 h-10 a2,2 0 0 1 -2,-2z" fill="#a03d0c"/>
<text x="14.2" y="16" font-size="9" font-weight="bold" fill="#fff" font-family="Liberation Sans">F</text><text x="0" y="0" font-size="3.6" font-weight="bold" fill="#f3c9a8" font-family="Liberation Sans" transform="translate(14 22)">360</text>
<!-- window controls -->
<line x1="1082" y1="15.5" x2="1092" y2="15.5" stroke="#000" stroke-width="1"/>
<rect x="1127.5" y="10.5" width="9.5" height="9.5" fill="none" stroke="#000" stroke-width="1"/>
<path d="M1173,10 L1183,20 M1183,10 L1173,20" stroke="#000" stroke-width="1.1"/>
<!-- tab bar left icons -->
<g fill="#6a6a6a">
<rect x="10" y="40" width="4" height="4" rx="0.8"/><rect x="15" y="40" width="4" height="4" rx="0.8"/><rect x="20" y="40" width="4" height="4" rx="0.8"/>
<rect x="10" y="45" width="4" height="4" rx="0.8"/><rect x="15" y="45" width="4" height="4" rx="0.8"/><rect x="20" y="45" width="4" height="4" rx="0.8"/>
<rect x="10" y="50" width="4" height="4" rx="0.8"/><rect x="15" y="50" width="4" height="4" rx="0.8"/><rect x="20" y="50" width="4" height="4" rx="0.8"/>
<path d="M43,39 h8 v5 h5 v10 a1,1 0 0 1 -1,1 h-12 a1,1 0 0 1 -1,-1 v-14 a1,1 0 0 1 1,-1z"/><path d="M52,39 l4,4 h-4z"/>
<path d="M62,44 h7 l-3.5,4z"/>
<path d="M89,40 h12 a1,1 0 0 1 1,1 v12 a1,1 0 0 1 -1,1 h-10 l-3,-3 v-10 a1,1 0 0 1 1,-1z"/>
<path d="M141,44 h7 l-3.5,4.7z"/>
<path d="M180.2,44 h6.8 l-3.4,4.7z" fill="#8a8a8a"/>
</g>
<path d="M92.2,40.3 v4.6 h6.3 v-4.6 M92.2,53.7 v-4.2 h6.3 v4.2" fill="none" stroke="#e2e2e2" stroke-width="0.9"/>
<path d="M127,41.5 l-5,4.5 l4.5,4 M122.5,46 h4 q6.5,0 6.5,7" fill="none" stroke="#6a6a6a" stroke-width="2.2"/>
<path d="M169,41.5 l5,4.5 l-4.5,4 M173.5,46 h-4 q-6.5,0 -6.5,7" fill="none" stroke="#8a8a8a" stroke-width="2.2"/>
<!-- lock -->
<g fill="#6f6f6f"><path d="M531,46 v-2.5 a4,4 0 0 1 8,0 v2.5 h-1.6 v-2.5 a2.4,2.4 0 0 0 -4.8,0 v2.5z"/><rect x="530" y="46" width="10" height="9" rx="1"/></g>
<path d="M532,49 h6 M532,51.5 h6" stroke="#f2f2f2" stroke-width="0.9"/>
<!-- tab close -->
<path d="M927.5,44.5 L935.5,52.5 M935.5,44.5 L927.5,52.5" stroke="#707070" stroke-width="1.4"/>
<!-- plus -->
<path d="M954,48.5 h13 M960.5,42 v13" stroke="#7a7a7a" stroke-width="2.2"/>
<!-- doc-pencil 9 of 10 -->
<path d="M986,40 h8 l4,4 v2 l-8,8 v1 h-4z" fill="#686868"/>
<path d="M990,55 l1,-4 l8,-8 l3,3 l-8,8z" fill="#686868" stroke="#cbcbcb" stroke-width="0.8"/>
<!-- clock -->
<circle cx="1071" cy="47" r="7.3" fill="none" stroke="#6a6a6a" stroke-width="1.3"/>
<circle cx="1071" cy="47" r="5.3" fill="none" stroke="#6a6a6a" stroke-width="1.3"/>
<path d="M1071,43.5 v4 h3" fill="none" stroke="#6a6a6a" stroke-width="1.3"/>
<!-- bell -->
<path d="M1098,52 h12 l-1.5,-2 v-4.5 a4.5,4.5 0 0 0 -9,0 v4.5z" fill="#6a6a6a"/>
<path d="M1102,54 h4 l-2,1.5z" fill="#6a6a6a"/>
<circle cx="1108" cy="42.5" r="2.6" fill="#0696d7"/>
<!-- help -->
<circle cx="1137" cy="47" r="8" fill="#6a6a6a"/>
<text x="1133" y="51.5" font-size="12" font-weight="bold" fill="#cbcbcb" font-family="Liberation Sans">?</text>
<!-- avatar -->
<defs><radialGradient id="av" cx="0.5" cy="0.4" r="0.6"><stop offset="0" stop-color="#a9b8cc"/><stop offset="1" stop-color="#8a9bb3"/></radialGradient>
<clipPath id="avc"><circle cx="1176" cy="47" r="12"/></clipPath></defs>
<circle cx="1176" cy="47" r="12" fill="url(#av)"/>
<g clip-path="url(#avc)" fill="#4f5a6a"><ellipse cx="1176" cy="43" rx="5" ry="6"/><ellipse cx="1176" cy="60" rx="10" ry="8"/></g>

<!-- DESIGN triangle -->
<path d="M88,102 h6 l-3,3.5z" fill="#333"/>
<!-- CREATE icons -->
<g fill="none" stroke="#555" stroke-width="1.1">
<path d="M139,113.3 h20.5"/><path d="M159.5,98.5 a7.2,7.2 0 0 1 0,14.8"/>
<rect x="182.5" y="95.5" width="28" height="20"/>
<circle cx="239.4" cy="105.2" r="15.5"/>
<path d="M268.5,120.4 C269,108 272,100.4 274.5,100.4 C280,100.4 286,111.4 291.5,111.4 C295,111.4 297.5,100 297.5,91.2"/>
<path d="M325,92 L310.5,120 h14.5z"/>
<path d="M353.5,92 v28 M385,92 v28"/>
</g>
<g fill="#1a8ae0">
<rect x="137" y="111.3" width="4" height="4"/><rect x="157.5" y="111.3" width="4" height="4"/><rect x="157.5" y="96.5" width="4" height="4"/>
<rect x="180.5" y="93.5" width="4" height="4"/><rect x="208.5" y="113.5" width="4" height="4"/>
<rect x="237.4" y="103.2" width="4" height="4"/>
<rect x="266.5" y="118.4" width="4" height="4"/><rect x="272.5" y="98.4" width="4" height="4"/><rect x="289.5" y="109.4" width="4" height="4"/><rect x="295.5" y="89.2" width="4" height="4"/>
</g>
<g fill="none" stroke="#1a8ae0" stroke-width="1.2">
<path d="M230,114.5 L249,96"/><path d="M230,114.5 l1.5,-5 M230,114.5 l5,-1.5 M249,96 l-5,1.5 M249,96 l-1.5,5"/>
<path d="M325.5,92 L340,120 h-14.5z"/>
<path d="M354,100.5 h30.5 M354,100.5 l4,-3 M354,100.5 l4,3 M384.5,100.5 l-4,-3 M384.5,100.5 l-4,3"/>
</g>
<path d="M280.2,132 h6 l-3,3.5z" fill="#333"/>
<line x1="395.5" y1="88" x2="395.5" y2="141" stroke="#d8d8d8"/>
<!-- MODIFY icons -->
<g fill="none" stroke="#555" stroke-width="1.1">
<path d="M427,90.2 h12"/><path d="M407.3,110 v12"/>
<path d="M474,92.5 h8"/>
<path d="M525,99.5 h-19 a6.55,6.55 0 0 0 0,13.1 h19"/>
</g>
<g fill="none" stroke="#1a8ae0" stroke-width="1.3">
<path d="M407.1,108.7 C407.1,98 415,90.2 426.2,90.2"/>
<path d="M450,92.5 h16" stroke-dasharray="2.5,2"/>
<path d="M525,94.4 h-20.5 a11.55,11.55 0 0 0 0,23.1 h20.5"/>
</g>
<path d="M457.5,96 l3,-2.2 l11,14.5 l-2.8,2.4z" fill="#222"/>
<path d="M468.8,90 l3,2 v16.5 h-3z" fill="#222"/>
<circle cx="470.3" cy="108.3" r="0.9" fill="#fff"/>
<g fill="none" stroke="#222" stroke-width="1.9">
<ellipse cx="467.6" cy="116.2" rx="3" ry="4.4" transform="rotate(20 467.6 116.2)"/>
<ellipse cx="475.6" cy="113.9" rx="3" ry="4.4" transform="rotate(-55 475.6 113.9)"/>
</g>
<path d="M483,132 h6 l-3,3.5z" fill="#333"/>
<line x1="534.8" y1="88" x2="534.8" y2="141" stroke="#d8d8d8"/>
<!-- CONSTRAINTS icons -->
<g stroke="#d42a2a" stroke-width="1.3" fill="none">
<path d="M563,92 v12 M556,93 l3,3 M556,97 l3,3 M556,101 l3,3 M555,107.5 h16 M555,111 h16 M557,116 l2,-3.5 M561,116 l2,-3.5 M565,116 l2,-3.5 M569,116 l2,-3.5"/>
<path d="M591.6,90 v30"/>
<circle cx="645" cy="109.4" r="12"/>
<path d="M723.6,112.4 L742,94.4"/>
</g>
<path d="M566,92 v12" stroke="#555" stroke-width="1.1"/>
<rect x="589.6" y="118.5" width="4" height="4" fill="#d42a2a"/>
<g stroke="#555" stroke-width="1.2" fill="none">
<path d="M594,120.5 h28"/>
<path d="M644,91 L664,110.5"/>
<path d="M728.6,117.4 L746.6,99.4"/>
</g>
<rect x="682.2" y="99" width="19.8" height="4" fill="#d42a2a"/>
<rect x="682.2" y="109" width="19.8" height="4" fill="#555"/>
<path d="M686,132 h6 l-3,3.5z" fill="#333"/>
<line x1="761" y1="88" x2="761" y2="141" stroke="#d8d8d8"/>
<!-- INSPECT -->
<g stroke="#666" stroke-width="1.1" fill="none"><path d="M790,98 v10 M817.5,98 v10 M790.5,102.6 h26.5 M790.5,102.6 l4,-2.5 M790.5,102.6 l4,2.5 M817,102.6 l-4,-2.5 M817,102.6 l-4,2.5"/></g>
<rect x="790" y="107.7" width="28" height="6.3" fill="#f2a81d"/>
<path d="M793,107.7 v2 M797,107.7 v2 M801,107.7 v2 M805,107.7 v2 M809,107.7 v2 M813,107.7 v2" stroke="#9a6a10" stroke-width="0.8"/>
<path d="M826,132 h6 l-3,3.5z" fill="#333"/>
<line x1="845.2" y1="88" x2="845.2" y2="141" stroke="#d8d8d8"/>
<!-- INSERT -->
<path d="M863.5,90.5 h17.5 l7.5,7.5 v11 h-25z" fill="#fff" stroke="#555" stroke-width="1"/>
<path d="M881,90.5 v7.5 h7.5z" fill="#f2a81d"/>
<rect x="863.2" y="109" width="25.4" height="12.7" fill="#f2a81d"/>
<circle cx="868" cy="115.3" r="2.8" fill="none" stroke="#222" stroke-width="1.1"/><path d="M868,111.5 v7.6 M864.2,115.3 h7.6 M865.3,112.6 l5.4,5.4 M870.7,112.6 l-5.4,5.4" stroke="#222" stroke-width="0.8"/>
<text x="0" y="0" font-size="9" font-weight="bold" fill="#fff" font-family="Liberation Sans" transform="translate(873 119.3) scale(0.78 1)">SVG</text>
<path d="M857,98.5 h9 v-3.5 l6.5,5.5 l-6.5,5.5 v-3.5 h-9z" fill="#1a8ae0"/>
<path d="M905,95 l5,-3 h20.5 v22 l-5,4.8 h-20.5z" fill="#e8e8e8" stroke="#555" stroke-width="1"/>
<path d="M905,95 h20.5 v23.8 M925.5,95 l5,-3" fill="none" stroke="#555" stroke-width="1"/>
<path d="M925.5,95 l5,-3 v22 l-5,4.8z" fill="#c8c8c8"/>
<path d="M902,116 C903,108 907,104 913,104 v-4 l7,6.5 l-7,6.5 v-4 C909,109 905,111 902,116z" fill="#3c3c3c" stroke="#f2f2f2" stroke-width="0.8"/>
<rect x="943.7" y="90.9" width="29.1" height="28.9" fill="#5fb6ec"/>
<path d="M943.7,107 C949,100 954,103 959,108 C963,103 968,102 972.8,110 v9.8 h-29.1z" fill="#2a7fc4"/>
<circle cx="965" cy="98.5" r="3.2" fill="#fdf0b0"/>
<path d="M933,132 h6 l-3,3.5z" fill="#333"/>
<line x1="985.3" y1="88" x2="985.3" y2="141" stroke="#d8d8d8"/>
<!-- SELECT -->
<rect x="1006" y="87" width="37.8" height="38" fill="#0696d7"/>
<rect x="1009.5" y="90.5" width="28" height="22" fill="none" stroke="#8fe07a" stroke-width="1" stroke-dasharray="3,2"/>
<path d="M1030,104 v17 l4,-3.5 l3,6.5 l3,-1.5 l-3,-6 h5z" fill="#fff"/>
<path d="M1046,132 h6 l-3,3.5z" fill="#333"/>
<!-- FINISH -->
<circle cx="1124" cy="105.9" r="15.5" fill="#5fc21a"/>
<path d="M1116.5,106 l5,5 l9,-9" fill="none" stroke="#fff" stroke-width="3.2"/>
<path d="M1164.3,132 h6 l-3,3.5z" fill="#333"/>
<line x1="1197" y1="88" x2="1197" y2="141" stroke="#d8d8d8"/>
</svg>


<!-- TIMELINE -->
<div class="a" style="left:1px;top:989px;width:1200px;height:1px;background:#d0d0d0"></div>
<div class="a" style="left:1px;top:990px;width:1200px;height:49px;background:#f2f2f2"></div>
<svg style="left:0;top:0" width="10" height="10">
<g fill="#4a4a4a">
<rect x="12" y="1007" width="2" height="14"/><path d="M24,1007.5 v13 l-9,-6.5z"/>
<path d="M46,1007.5 v13 l-9,-6.5z"/><rect x="47.2" y="1011.5" width="1.9" height="5"/>
<path d="M62,1006.5 v15 l11,-7.5z"/>
<rect x="86" y="1011.5" width="2" height="5"/><path d="M89,1007.5 v13 l9,-6.5z"/>
<path d="M112,1007.5 v13 l9,-6.5z"/><rect x="122" y="1007" width="2" height="14"/>
</g>
<rect x="145" y="997" width="116" height="6" fill="#e6c760"/>
<path d="M257,998 h12 v3 l-4.5,5 h-3 l-4.5,-5z" fill="#555"/>
<rect x="262" y="1004" width="2" height="27" fill="#555"/>
<path d="M155.5,1025 v5 h96 v-5 M178.5,1025 v5 M203,1025 v5 M227,1025 v5" fill="none" stroke="#c4c4c4" stroke-width="1.5"/>
<g id="tsk">
<rect x="147.5" y="1006.5" width="12" height="12" fill="none" stroke="#555" stroke-width="1"/>
<g fill="#1a8ae0"><rect x="146" y="1005" width="3" height="3"/><rect x="158" y="1005" width="3" height="3"/><rect x="146" y="1017" width="3" height="3"/></g>
<path d="M156,1020 l6,-6 l2,2 l-6,6 l-2.5,0.5z" fill="#f2b233"/><circle cx="162.5" cy="1014.5" r="1.6" fill="#e03030"/>
</g>
<use href="#tsk" x="24"/><use href="#tsk" x="97.5"/>
<!-- extrude-like icon -->
<path d="M196,1008 h8 a5,5 0 0 1 5,5 v4 l-3,3 h-10 a3,3 0 0 1 -3,-3 v-6z" fill="#6cb6ee" stroke="#3a88c8" stroke-width="0.8"/>
<rect x="201.5" y="1013.5" width="8" height="8" fill="#fff" stroke="#333" stroke-width="1"/>
<!-- box icon -->
<path d="M220,1008 l3,-3 h12 v13 l-3,3 h-12z" fill="#ddd" stroke="#444" stroke-width="1"/>
<path d="M220,1008 h12 v13 M232,1008 l3,-3" fill="none" stroke="#444" stroke-width="1"/>
<rect x="221" y="1009" width="11" height="12" fill="#f0f0f0"/>
<path d="M222.5,1011 h3 v5.5 h5.5 v3 h-8.5z" fill="#3a8ed6"/>
<!-- gear -->
<g transform="translate(1180,1014)" fill="#8f8f8f">
<circle r="5.6"/>
<rect x="-1.6" y="-8" width="3.2" height="16"/><rect x="-1.6" y="-8" width="3.2" height="16" transform="rotate(45)"/><rect x="-1.6" y="-8" width="3.2" height="16" transform="rotate(90)"/><rect x="-1.6" y="-8" width="3.2" height="16" transform="rotate(135)"/>
<circle r="2.8" fill="#f2f2f2"/>
</g>
</svg>


<!-- window border -->
<div class="a" style="left:0;top:0;width:1px;height:1040px;background:#5f5f5f"></div>
<div class="a" style="left:1201px;top:0;width:1px;height:1040px;background:#5f5f5f"></div>
<div class="a" style="left:0;top:1039px;width:1202px;height:1px;background:#5f5f5f"></div>
<div class="a" style="left:0;top:0;width:576px;height:1px;background:#5f5f5f"></div>
<div class="a" style="left:576px;top:0;width:96px;height:1px;background:#e0e0e0"></div>
<div class="a" style="left:672px;top:0;width:48px;height:1px;background:#0078d7"></div>
<div class="a" style="left:720px;top:0;width:97px;height:1px;background:#e0e0e0"></div>
<div class="a" style="left:817px;top:0;width:385px;height:1px;background:#5f5f5f"></div>
</body></html>
